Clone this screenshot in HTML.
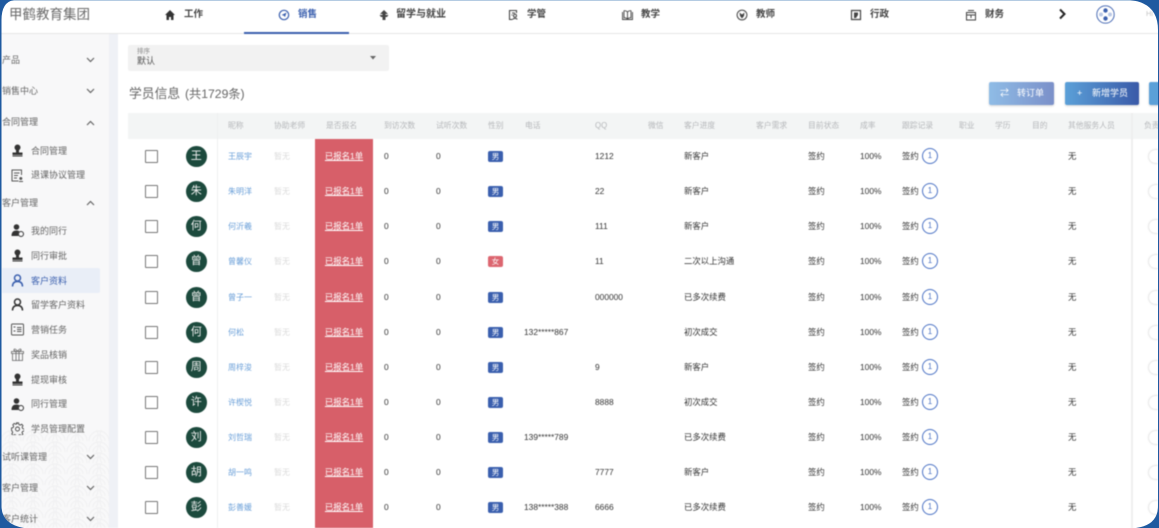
<!DOCTYPE html>
<html lang="zh"><head><meta charset="utf-8"><title>学员信息</title>
<style>
*{box-sizing:border-box}
html,body{margin:0;padding:0;width:1159px;height:528px;overflow:hidden;background:#fff}
body{font-family:"Liberation Sans","Noto Sans CJK SC",sans-serif;position:relative}
#w{position:absolute;left:0;top:0;width:1159px;height:528px;overflow:hidden;filter:blur(.5px)}
#fr{position:absolute;left:0;top:0;width:1159px;height:528px;overflow:hidden;pointer-events:none}
.a{position:absolute;white-space:nowrap}
.t{position:absolute;white-space:nowrap;line-height:14px}
.nav{top:8px;font-size:9.5px;font-weight:700;color:#444}
.nav svg{position:absolute;left:-20px;top:1px;width:12px;height:12px}
.g{left:2px;font-size:9px;color:#666}
.chev{position:absolute;left:86px;width:9px;height:6px}
.s{left:31px;font-size:9px;color:#666}
.ic{position:absolute;left:11px;width:13px;height:13px}
.h{top:119px;font-size:7.8px;color:#b5b7ba}
.r{position:absolute;left:0;width:1159px;height:35px}
.r>*{position:absolute;white-space:nowrap;top:10px;line-height:14px;font-size:8.4px;color:#333}
.cb{left:145px!important;top:11px!important;width:13px;height:13px;border:1.5px solid #777;border-radius:1px;background:#fff}
.av{left:186px!important;top:7px!important;width:20.5px;height:20.5px;border-radius:50%;background:#1c4a3d;color:#f2f2f2!important;text-align:center;font-size:11px!important;line-height:20px!important}
.n{left:228px;top:11px!important;font-size:8px!important;color:#6a9fd8!important}
.z{left:274px;top:11px!important;font-size:8px!important;color:#dcdcdc!important}
.red{left:315px;width:58px;color:#fff!important;text-align:center;text-decoration:underline}
.c0{left:384px}.c1{left:436px}
.sx{left:488px;top:12px!important;width:15px;height:11px;border-radius:2px;background:#3a5fae;color:#fff!important;text-align:center;line-height:11px!important;font-size:7.5px!important}
.f{background:#dc6670}
.p{left:524px}.q{left:595px}.j{left:684px}.st{left:808px}.v{left:860px}.tr{left:902px}
.b1{left:922px;top:9px!important;width:16px;height:16px;border:1px solid #4b72c4;border-radius:50%;text-align:center;color:#4b72c4!important;line-height:14px!important;font-size:8px!important}
.o{left:1068px}
.tg{left:1149px;top:11px!important;width:9px;height:13px;border-radius:7px 0 0 7px;background:#fff;box-shadow:0 0 2px #bbb}
.btn{position:absolute;top:82px;height:23px;border-radius:2px;color:#fff;font-size:9px;line-height:23px;box-shadow:0 1px 2px rgba(0,0,0,.18)}
</style></head><body>
<svg width="0" height="0" style="position:absolute">
<defs>
<symbol id="stamp" viewBox="0 0 13 13"><circle cx="6.5" cy="3.5" r="3" fill="#333"/><path d="M5 6h3v2.500H5zM1.500 8.500h10v2.500h-10zM1.500 11.500h10v1h-10z" fill="#333"/></symbol>
<symbol id="doc" viewBox="0 0 13 13"><path d="M10.500 6V1H1v11h6.500M3 4h5.500M3 6.500h4M3 9h3" fill="none" stroke="#555" stroke-width="1"/><circle cx="9.800" cy="9.500" r="1.500" fill="#555"/><path d="M8 12.500h4" stroke="#555"/></symbol>
<symbol id="peer" viewBox="0 0 13 13"><circle cx="5.500" cy="3" r="2.800" fill="#333"/><path d="M0.500 12c0-4 2-5.500 5-5.500 1.500 0 2.500.4 3 1-1.500 1-1.800 3-.8 4.500z" fill="#333"/><circle cx="10" cy="10" r="2.500" fill="none" stroke="#333" stroke-width="1"/></symbol>
<symbol id="user" viewBox="0 0 13 13"><circle cx="6.500" cy="4" r="3" fill="none" stroke="currentColor" stroke-width="1.500"/><path d="M1.500 12.500c0-3.500 2-5 5-5s5 1.500 5 5" fill="none" stroke="currentColor" stroke-width="1.500"/></symbol>
<symbol id="task" viewBox="0 0 13 13"><rect x=".5" y="1" width="12" height="11" rx="1" fill="none" stroke="#555"/><path d="M2.500 4h2M2.500 8h2M6 4.500h4.500M6 6.500h4.500M6 8.500h4.500" stroke="#555" fill="none"/></symbol>
<symbol id="gift" viewBox="0 0 13 13"><path d="M.5 3.500h12v2h-12zM1.500 5.500v7h10v-7M5 3.500v9M8 3.500v9M6.500 3.500C5 1 3.500.5 3 1.500s1 2 3.500 2zM6.500 3.500C8 1 9.500.5 10 1.500s-1 2-3.500 2z" fill="none" stroke="#666" stroke-width=".8"/></symbol>
<symbol id="gear" viewBox="0 0 13 13"><path d="M5.500.8h2l.4 1.700 1.300.6 1.500-.9 1.300 1.500-.9 1.400.5 1.400 1.600.5v2l-1.600.4-.6 1.300.9 1.500-1.400 1.300-1.500-.9-1.300.5-.4 1.600h-2l-.4-1.600-1.300-.6-1.500.9-1.300-1.400.9-1.500-.6-1.300L.5 8V6l1.600-.4.600-1.300-.9-1.500L3.200 1.400l1.500.9 1.300-.5z" fill="none" stroke="#444" stroke-width=".9"/><circle cx="6.500" cy="7" r="2" fill="none" stroke="#444" stroke-width=".9"/></symbol>
<symbol id="dn" viewBox="0 0 9 6"><path d="M1 1l3.500 3.500L8 1" fill="none" stroke="#666" stroke-width="1.200"/></symbol>
<symbol id="up" viewBox="0 0 9 6"><path d="M1 5l3.500-3.500L8 5" fill="none" stroke="#666" stroke-width="1.200"/></symbol>
<pattern id="wave" width="22" height="11" patternUnits="userSpaceOnUse"><g fill="none" stroke="#f0f0f1" stroke-width="1"><circle cx="11" cy="11" r="10"/><circle cx="11" cy="11" r="6"/><circle cx="0" cy="5" r="10"/><circle cx="22" cy="5" r="10"/></g></pattern>
</defs></svg>
<div id="w">
<!-- sidebar -->
<div class="a" style="left:0;top:34px;width:109px;height:494px;background:#f8f8f9"></div>
<div class="a" style="left:109px;top:34px;width:9px;height:494px;background:#eff1f6"></div>
<svg class="a" style="left:0;top:430px" width="109" height="98"><rect width="109" height="98" fill="url(#wave)"/></svg>

<!-- top nav -->
<div class="a" style="left:0;top:0;width:1159px;height:34px;background:#fff;border-bottom:1px solid #e6e6e6"></div>
<div class="t" style="left:9px;top:6px;font-size:13.5px;color:#6a6a6a;line-height:17px">甲鹤教育集团</div>
<div class="a" style="left:244px;top:32px;width:105px;height:1.5px;background:#3a5fae"></div>
<div class="t nav" style="left:184px"><svg viewBox="0 0 12 12"><path d="M6 1L1 6h1.500v5H5V8h2v3h2.500V6H11z" fill="#333"/></svg>工作</div>
<div class="t nav" style="left:298px;color:#3a5fae"><svg viewBox="0 0 12 12"><circle cx="6" cy="6" r="4.700" fill="none" stroke="#3a5fae" stroke-width="1.200"/><path d="M3.500 6L8.500 3.500 7 8 5.500 6.500z" fill="#3a5fae"/></svg>销售</div>
<div class="t nav" style="left:396px;font-size:10px"><svg viewBox="0 0 12 12" style="left:-18px"><path d="M6 1L2 5h2.500v1H1.500l1.500 2H4.500v3h3V8H9l1.500-2H7.500V5H10z" fill="#444"/></svg>留学与就业</div>
<div class="t nav" style="left:527px"><svg viewBox="0 0 12 12"><path d="M9.500 4V1.500h-7v9h3M5 4h3M4.500 6h1" fill="none" stroke="#444" stroke-width="1.100"/><circle cx="8" cy="6.800" r="1.500" fill="none" stroke="#444"/><path d="M5.800 10.500c.5-1.500 3.800-1.500 4.400 0" fill="none" stroke="#444"/></svg>学管</div>
<div class="t nav" style="left:641px"><svg viewBox="0 0 12 12" style="width:13px"><path d="M6 3C5 2 3.500 1.500 2.500 1.800v7C3.500 8.500 5 9 6 10c1-1 2.500-1.500 3.500-1.200v-7C8.500 1.500 7 2 6 3zM6 3v7M1 3v7.500h10V3" fill="none" stroke="#444" stroke-width=".9"/></svg>教学</div>
<div class="t nav" style="left:756px"><svg viewBox="0 0 12 12"><circle cx="6" cy="6" r="4.900" fill="none" stroke="#444"/><path d="M3.500 3.500L6 5.500 8.500 3.500 8 7 6 9.500 4 7z" fill="#444"/></svg>教师</div>
<div class="t nav" style="left:870px"><svg viewBox="0 0 12 12"><path d="M1.500 1.500h9v9h-9z" fill="none" stroke="#444" stroke-width="1.200"/><path d="M4 3.500h4v2.500L6 9H4z" fill="#444"/></svg>行政</div>
<div class="t nav" style="left:985px"><svg viewBox="0 0 12 12"><path d="M3 1.500h6M1.500 3.500h9v7.500h-9zM1.500 6h9M6 6v3" fill="none" stroke="#444" stroke-width="1"/></svg>财务</div>
<svg class="a" style="left:1058px;top:8px" width="9" height="12" viewBox="0 0 9 12"><path d="M2 1.500L6.500 6 2 10.500" fill="none" stroke="#222" stroke-width="2"/></svg>
<svg class="a" style="left:1096px;top:5px" width="19" height="19" viewBox="0 0 19 19"><circle cx="9.500" cy="9.500" r="8.700" fill="#fff" stroke="#3a5fae" stroke-width=".9"/><circle cx="9.500" cy="5.500" r="2.200" fill="#3a5fae"/><circle cx="9.500" cy="13.500" r="2.200" fill="#3a5fae"/><circle cx="5" cy="9.500" r="2" fill="#b9c8e6"/><circle cx="14" cy="9.500" r="2" fill="#b9c8e6"/></svg>
<div class="t" style="left:1146px;top:7px;font-size:7.5px;color:#c5c5c5">Hi</div>

<!-- sidebar items -->
<div class="t g" style="top:53px">产品</div><svg class="chev" style="top:57px"><use href="#dn"/></svg>
<div class="t g" style="top:84px">销售中心</div><svg class="chev" style="top:88px"><use href="#dn"/></svg>
<div class="t g" style="top:115px">合同管理</div><svg class="chev" style="top:120px"><use href="#up"/></svg>
<svg class="ic" style="top:144px"><use href="#stamp"/></svg><div class="t s" style="top:144px">合同管理</div>
<svg class="ic" style="top:169px"><use href="#doc"/></svg><div class="t s" style="top:168px">退课协议管理</div>
<div class="t g" style="top:196px">客户管理</div><svg class="chev" style="top:200px"><use href="#up"/></svg>
<svg class="ic" style="top:224px"><use href="#peer"/></svg><div class="t s" style="top:224px">我的同行</div>
<svg class="ic" style="top:249px"><use href="#stamp"/></svg><div class="t s" style="top:249px">同行审批</div>
<div class="a" style="left:2px;top:268px;width:98px;height:25px;background:#e9eef7;border-radius:0 2px 2px 0"></div>
<svg class="ic" style="top:274px;color:#3a5fae"><use href="#user"/></svg><div class="t s" style="top:274px;color:#3a5fae">客户资料</div>
<svg class="ic" style="top:298px;color:#333"><use href="#user"/></svg><div class="t s" style="top:298px">留学客户资料</div>
<svg class="ic" style="top:323px"><use href="#task"/></svg><div class="t s" style="top:323px">营销任务</div>
<svg class="ic" style="top:348px"><use href="#gift"/></svg><div class="t s" style="top:348px">奖品核销</div>
<svg class="ic" style="top:373px"><use href="#stamp"/></svg><div class="t s" style="top:373px">提现审核</div>
<svg class="ic" style="top:398px"><use href="#peer"/></svg><div class="t s" style="top:397px">同行管理</div>
<svg class="ic" style="top:422px"><use href="#gear"/></svg><div class="t s" style="top:422px">学员管理配置</div>
<div class="t g" style="top:450px">试听课管理</div><svg class="chev" style="top:454px"><use href="#dn"/></svg>
<div class="t g" style="top:481px">客户管理</div><svg class="chev" style="top:485px"><use href="#dn"/></svg>
<div class="t g" style="top:512px">客户统计</div><svg class="chev" style="top:516px"><use href="#dn"/></svg>

<!-- filter -->
<div class="a" style="left:128px;top:45px;width:261px;height:26px;background:#f2f2f2;border-radius:2px"></div>
<div class="t" style="left:137px;top:46px;font-size:6.500px;color:#888;line-height:12px">排序</div>
<div class="t" style="left:137px;top:55px;font-size:9px;color:#555;line-height:13px">默认</div>
<svg class="a" style="left:369px;top:56px" width="8" height="4"><path d="M1 0h6L4 3.500z" fill="#666"/></svg>
<div class="t" style="left:129px;top:85px;font-size:12.800px;color:#666;line-height:18px">学员信息</div>
<div class="t" style="left:185px;top:85px;font-size:12.200px;color:#666;line-height:18px">(共1729条)</div>

<!-- buttons -->
<div class="btn" style="left:989px;width:65px;background:linear-gradient(90deg,#8fbce6,#7b90c9)"><span style="position:absolute;left:11px;font-size:9px">⇄</span><span style="position:absolute;left:28px">转订单</span></div>
<div class="btn" style="left:1065px;width:74px;background:linear-gradient(90deg,#5ba0d8,#3a5aa8)"><span style="position:absolute;left:12px">+</span><span style="position:absolute;left:27px">新增学员</span></div>
<div class="btn" style="left:1149px;width:10px;background:#5ba0d8;border-radius:2px 0 0 2px"></div>

<!-- table head -->
<div class="a" style="left:128px;top:113px;width:1031px;height:26px;background:#f3f5f5"></div>
<div class="a" style="left:217px;top:113px;width:1px;height:415px;background:#eef0f0"></div>
<div class="a" style="left:1131px;top:113px;width:2px;height:415px;background:#eeeeee"></div>
<div class="a" style="left:315px;top:139px;width:58px;height:389px;background:#d75f69"></div>
<div class="t h" style="left:228px">昵称</div><div class="t h" style="left:274px">协助老师</div><div class="t h" style="left:326px">是否报名</div><div class="t h" style="left:384px">到访次数</div><div class="t h" style="left:436px">试听次数</div><div class="t h" style="left:488px">性别</div><div class="t h" style="left:525px">电话</div><div class="t h" style="left:595px">QQ</div><div class="t h" style="left:648px">微信</div><div class="t h" style="left:684px">客户进度</div><div class="t h" style="left:756px">客户需求</div><div class="t h" style="left:808px">目前状态</div><div class="t h" style="left:860px">成率</div><div class="t h" style="left:902px">跟踪记录</div><div class="t h" style="left:959px">职业</div><div class="t h" style="left:995px">学历</div><div class="t h" style="left:1032px">目的</div><div class="t h" style="left:1068px">其他服务人员</div><div class="t h" style="left:1144px">负责</div>

<!-- rows -->
<div class="r" style="top:139px"><i class="cb"></i><span class="av">王</span><span class="n">王辰宇</span><span class="z">暂无</span><span class="red">已报名1单</span><span class="c0">0</span><span class="c1">0</span><span class="sx">男</span><span class="q">1212</span><span class="j">新客户</span><span class="st">签约</span><span class="v">100%</span><span class="tr">签约</span><span class="b1">1</span><span class="o">无</span><i class="tg"></i></div>
<div class="r" style="top:174px"><i class="cb"></i><span class="av">朱</span><span class="n">朱明洋</span><span class="z">暂无</span><span class="red">已报名1单</span><span class="c0">0</span><span class="c1">0</span><span class="sx">男</span><span class="q">22</span><span class="j">新客户</span><span class="st">签约</span><span class="v">100%</span><span class="tr">签约</span><span class="b1">1</span><span class="o">无</span><i class="tg"></i></div>
<div class="r" style="top:209px"><i class="cb"></i><span class="av">何</span><span class="n">何沂羲</span><span class="z">暂无</span><span class="red">已报名1单</span><span class="c0">0</span><span class="c1">0</span><span class="sx">男</span><span class="q">111</span><span class="j">新客户</span><span class="st">签约</span><span class="v">100%</span><span class="tr">签约</span><span class="b1">1</span><span class="o">无</span><i class="tg"></i></div>
<div class="r" style="top:244px"><i class="cb"></i><span class="av">曾</span><span class="n">曾馨仪</span><span class="z">暂无</span><span class="red">已报名1单</span><span class="c0">0</span><span class="c1">0</span><span class="sx f">女</span><span class="q">11</span><span class="j">二次以上沟通</span><span class="st">签约</span><span class="v">100%</span><span class="tr">签约</span><span class="b1">1</span><span class="o">无</span><i class="tg"></i></div>
<div class="r" style="top:280px"><i class="cb"></i><span class="av">曾</span><span class="n">曾子一</span><span class="z">暂无</span><span class="red">已报名1单</span><span class="c0">0</span><span class="c1">0</span><span class="sx">男</span><span class="q">000000</span><span class="j">已多次续费</span><span class="st">签约</span><span class="v">100%</span><span class="tr">签约</span><span class="b1">1</span><span class="o">无</span><i class="tg"></i></div>
<div class="r" style="top:315px"><i class="cb"></i><span class="av">何</span><span class="n">何松</span><span class="z">暂无</span><span class="red">已报名1单</span><span class="c0">0</span><span class="c1">0</span><span class="sx">男</span><span class="p">132*****867</span><span class="j">初次成交</span><span class="st">签约</span><span class="v">100%</span><span class="tr">签约</span><span class="b1">1</span><span class="o">无</span><i class="tg"></i></div>
<div class="r" style="top:350px"><i class="cb"></i><span class="av">周</span><span class="n">周梓浚</span><span class="z">暂无</span><span class="red">已报名1单</span><span class="c0">0</span><span class="c1">0</span><span class="sx">男</span><span class="q">9</span><span class="j">新客户</span><span class="st">签约</span><span class="v">100%</span><span class="tr">签约</span><span class="b1">1</span><span class="o">无</span><i class="tg"></i></div>
<div class="r" style="top:385px"><i class="cb"></i><span class="av">许</span><span class="n">许楔悦</span><span class="z">暂无</span><span class="red">已报名1单</span><span class="c0">0</span><span class="c1">0</span><span class="sx">男</span><span class="q">8888</span><span class="j">初次成交</span><span class="st">签约</span><span class="v">100%</span><span class="tr">签约</span><span class="b1">1</span><span class="o">无</span><i class="tg"></i></div>
<div class="r" style="top:420px"><i class="cb"></i><span class="av">刘</span><span class="n">刘哲瑞</span><span class="z">暂无</span><span class="red">已报名1单</span><span class="c0">0</span><span class="c1">0</span><span class="sx">男</span><span class="p">139*****789</span><span class="j">已多次续费</span><span class="st">签约</span><span class="v">100%</span><span class="tr">签约</span><span class="b1">1</span><span class="o">无</span><i class="tg"></i></div>
<div class="r" style="top:455px"><i class="cb"></i><span class="av">胡</span><span class="n">胡一鸣</span><span class="z">暂无</span><span class="red">已报名1单</span><span class="c0">0</span><span class="c1">0</span><span class="sx">男</span><span class="q">7777</span><span class="j">新客户</span><span class="st">签约</span><span class="v">100%</span><span class="tr">签约</span><span class="b1">1</span><span class="o">无</span><i class="tg"></i></div>
<div class="r" style="top:490px;height:38px"><i class="cb"></i><span class="av">彭</span><span class="n">彭善媛</span><span class="z">暂无</span><span class="red">已报名1单</span><span class="c0">0</span><span class="c1">0</span><span class="sx">男</span><span class="p">138*****388</span><span class="q">6666</span><span class="j">已多次续费</span><span class="st">签约</span><span class="v">100%</span><span class="tr">签约</span><span class="b1">1</span><span class="o">无</span><i class="tg"></i></div>
</div>

<!-- frame (not blurred) -->
<div id="fr">
<div class="a" style="left:10px;top:0;width:1125px;height:1px;background:#b4cbe2"></div>
<svg class="a" style="left:0;top:0" width="1159" height="528" viewBox="0 0 1159 528"><path fill-rule="evenodd" fill="#1f5aa0" d="M0 0H14Q1.500 2 1.500 20V506Q1.500 524 24 528H0ZM1130 0H1159V528H1136Q1158 525 1158 506V30Q1158 3 1130 0Z"/></svg>
</div>
</body></html>
